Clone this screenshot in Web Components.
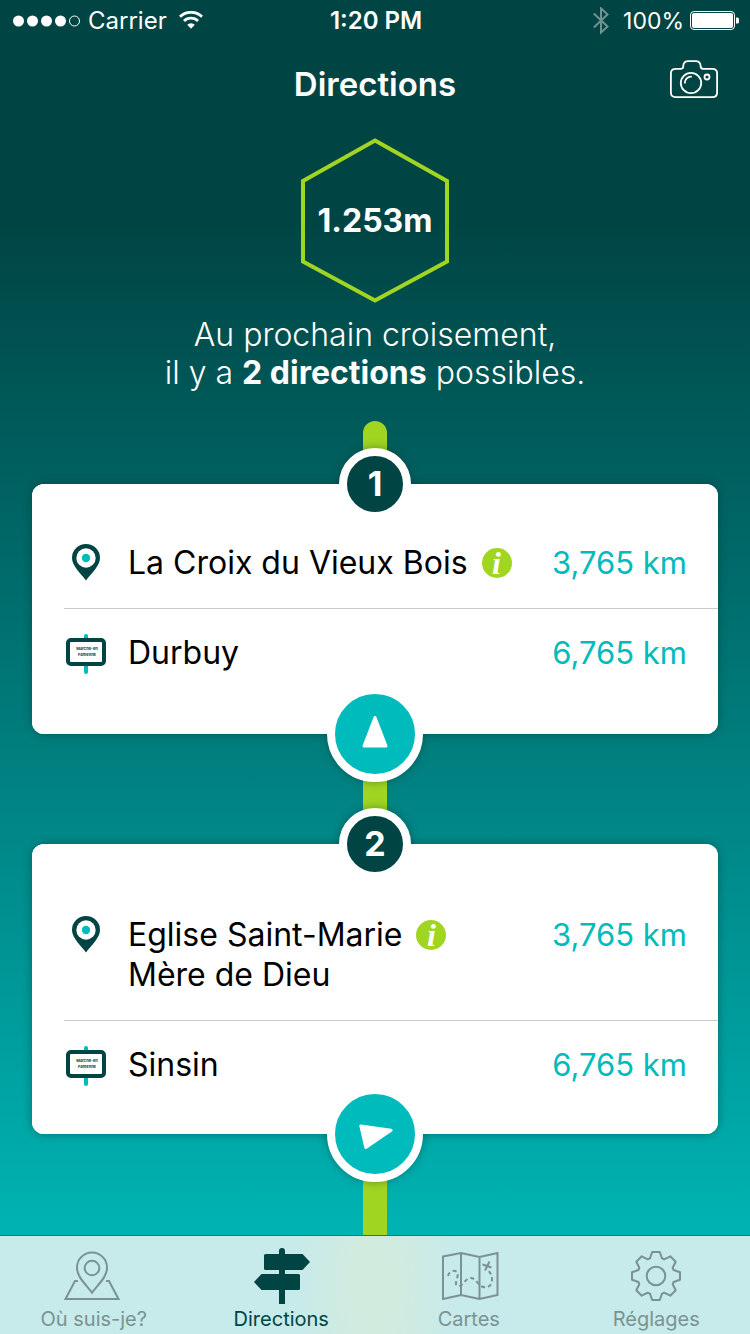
<!DOCTYPE html>
<html lang="fr">
<head>
<meta charset="utf-8">
<meta name="viewport" content="width=device-width, initial-scale=1">
<title>Directions</title>
<style>
  :root {
    --deep: #004443;
    --teal: #00bbbb;
    --lime: #a0d622;
    --muted: #7a9392;
  }
  html, body { margin: 0; }
  body {
    font-family: Inter, "Liberation Sans", sans-serif;
    color: #fff;
    background: #00b3b3;
  }
</style>
</head>
<body>
<directions-app>
  <status-bar slot="top" carrier="Carrier" time="1:20 PM" battery="100%"></status-bar>
  <nav-header slot="top">Directions</nav-header>
  <distance-hexagon slot="intro">1.253m</distance-hexagon>
  <intro-text slot="intro">Au prochain croisement,<br>il y a <b>2 directions</b> possibles.</intro-text>
  <direction-card number="1" heading="0">
    <place-row icon="pin" distance="3,765 km">La Croix du Vieux Bois <info-button></info-button></place-row>
    <place-row icon="sign" distance="6,765 km">Durbuy</place-row>
  </direction-card>
  <direction-card number="2" heading="77" class="low">
    <place-row icon="pin" distance="3,765 km">Eglise Saint-Marie <info-button></info-button><br>Mère de Dieu</place-row>
    <place-row icon="sign" distance="6,765 km">Sinsin</place-row>
  </direction-card>
  <tab-bar slot="bottom">
    <tab-item icon="locate">Où suis-je?</tab-item>
    <tab-item icon="signpost" active>Directions</tab-item>
    <tab-item icon="map">Cartes</tab-item>
    <tab-item icon="gear">Réglages</tab-item>
  </tab-bar>
</directions-app>

<script>
const define = (name, render) => customElements.define(name, class extends HTMLElement {
  connectedCallback() {
    if (!this.shadowRoot) this.attachShadow({ mode: 'open' }).innerHTML = render(this);
  }
});

define('directions-app', () => `
  <style>
    :host {
      display: flex; flex-direction: column; min-height: 100vh;
      background: linear-gradient(var(--deep) 16%, #00b4b4 93%);
    }
    .intro { display: flex; flex-direction: column; align-items: center; gap: 12px; padding: 9px 16px 0; }
    main { flex: 1; display: flex; flex-direction: column; }
    .route {
      position: relative; flex: 1; display: flex; flex-direction: column; gap: 110px;
      margin-top: 29px; padding: 63px 32px 100px;
    }
    .route::before {
      content: ""; position: absolute; top: 0; bottom: 0; left: calc(50% - 12px); width: 24px;
      background: var(--lime); border-radius: 12px 12px 0 0;
    }
  </style>
  <header><slot name="top"></slot></header>
  <main>
    <div class="intro"><slot name="intro"></slot></div>
    <div class="route"><slot></slot></div>
  </main>
  <slot name="bottom"></slot>`);

define('status-bar', el => `
  <style>
    :host {
      box-sizing: border-box; display: grid; grid-template-columns: 1fr auto 1fr; align-items: center;
      height: 40px; padding: 2px 11px 0 13px; font-size: 24px; line-height: 38px;
    }
    .side { display: flex; align-items: center; gap: 8px; }
    .wifi { margin-left: 4px; }
    .right { justify-content: flex-end; gap: 6px; font-size: 23px; }
    .bt { margin-right: 8px; }
    .time { font-weight: 600; }
    svg { display: block; }
  </style>
  <div class="side">
    <svg width="67" height="12" viewBox="0 0 67 12" fill="#fff">
      <circle cx="5.5" cy="6" r="5.5"/><circle cx="19.5" cy="6" r="5.5"/><circle cx="33.5" cy="6" r="5.5"/><circle cx="47.5" cy="6" r="5.5"/>
      <circle cx="61.5" cy="6" r="5" fill="none" stroke="#fff"/>
    </svg>
    <span>${el.getAttribute('carrier')}</span>
    <svg class="wifi" width="24" height="20" viewBox="0 0 24 20" fill="none" stroke="#fff" stroke-width="2.8">
      <path d="M1 5.800a15.600 15.600 0 0 1 22 0"/><path d="M5 10a10 10 0 0 1 14 0"/>
      <path d="M12 17.800l-3.800-4a5.400 5.400 0 0 1 7.600 0z" fill="#fff" stroke="none"/>
    </svg>
  </div>
  <span class="time">${el.getAttribute('time')}</span>
  <div class="side right">
    <svg class="bt" width="16" height="28" viewBox="0 0 16 28" fill="none" stroke="#6f9392" stroke-width="2">
      <path d="M.8 6.500 14.500 19.500 8 25.500V1.300L14.500 7.500 .8 20.500"/>
    </svg>
    <span>${el.getAttribute('battery')}</span>
    <svg width="49" height="20" viewBox="0 0 49 20">
      <rect x=".5" y=".5" width="44" height="18" rx="3.5" fill="none" stroke="#fff"/>
      <rect x="2" y="2" width="41" height="15" rx="2" fill="#fff"/>
      <path d="M46 6.500h1.500q1.500 0 1.500 1.500v3q0 1.500-1.500 1.500H46z" fill="#fff"/>
    </svg>
  </div>`);

define('nav-header', () => `
  <style>
    :host { display: grid; grid-template-columns: 1fr auto 1fr; align-items: center; height: 88px; padding: 0 31px; }
    h1 { grid-column: 2; margin: 0; font-size: 33px; line-height: 40px; font-weight: 600; }
    button { justify-self: end; padding: 0; margin-bottom: 10px; border: 0; background: none; color: inherit; cursor: pointer; }
    svg { display: block; }
  </style>
  <h1><slot></slot></h1>
  <button type="button" aria-label="Appareil photo">
    <svg width="50" height="40" viewBox="0 0 50 40" fill="none" stroke="currentColor" stroke-width="1.8">
      <path d="M6 9.900H11.500Q14 9.900 14.300 7.500V6.500Q14.800 2.100 19.200 2.100H26.800Q31 2.100 31.600 6.500V7.500Q32 9.900 34.500 9.900H43.500Q48.100 9.900 48.100 14.500V33.500Q48.100 38.100 43.500 38.100H6.500Q1.900 38.100 1.900 33.500V14.500Q1.900 9.900 6.500 9.900"/>
      <circle cx="22" cy="24" r="10.200"/>
      <path d="M15.800 24.500a6.300 6.300 0 0 1 7-6.800"/>
      <circle cx="38" cy="18" r="2.500"/>
    </svg>
  </button>`);

define('distance-hexagon', () => `
  <style>
    :host { display: grid; place-items: center; }
    svg, span { grid-area: 1 / 1; display: block; }
    span { font-size: 32px; line-height: 40px; font-weight: 700; }
  </style>
  <svg width="150" height="167" viewBox="0 0 150 167" fill="none" stroke="var(--lime)" stroke-width="4">
    <path d="M75 3.500 147 44V124.500L75 163.500 3 124.500V44z"/>
  </svg>
  <span><slot></slot></span>`);

define('intro-text', () => `
  <style>
    :host { display: block; text-align: center; font-size: 32px; line-height: 38px; font-weight: 300; }
    ::slotted(b) { font-weight: 700; }
  </style>
  <slot></slot>`);

define('direction-card', el => `
  <style>
    :host {
      position: relative; isolation: isolate; display: block; padding: 34px 0 35px 32px;
      background: #fff; color: #000; border-radius: 12px; box-shadow: 0 0 10px rgba(0, 40, 40, .4);
    }
    :host(.low) { padding: 46px 0 23px 32px; }
    .badge, .heading {
      position: absolute; left: 50%; box-sizing: border-box; display: grid; place-items: center;
      border: 8px solid #fff; border-radius: 50%; color: #fff;
    }
    .badge {
      top: 0; width: 72px; height: 72px; transform: translate(-50%, -50%);
      background: var(--deep); font-size: 34px; line-height: 40px; font-weight: 700;
    }
    .heading { bottom: 0; width: 96px; height: 96px; transform: translate(-50%, 50%); background: var(--teal); }
    .glow { position: absolute; left: 50%; border-radius: 50%; box-shadow: 0 0 10px rgba(0, 40, 40, .4); z-index: -1; }
    .glow.a { top: -36px; width: 72px; height: 72px; margin-left: -36px; }
    .glow.b { bottom: -48px; width: 96px; height: 96px; margin-left: -48px; }
    .face { position: absolute; inset: 0; background: #fff; border-radius: inherit; z-index: -1; }
    svg { display: block; transform: rotate(${el.getAttribute('heading')}deg); }
  </style>
  <div class="glow a"></div><div class="glow b"></div><div class="face"></div>
  <slot></slot>
  <div class="badge">${el.getAttribute('number')}</div>
  <div class="heading">
    <svg width="40" height="40" viewBox="0 0 40 40" fill="#fff" stroke="#fff" stroke-width="3" stroke-linejoin="round">
      <path d="M20 3.500 31 32H9z"/>
    </svg>
  </div>`);

const rowIcons = {
  pin: `
    <path d="M22 3A14 14 0 0 0 8 17C8 25 17 32.500 22 39.500 27 32.500 36 25 36 17A14 14 0 0 0 22 3z" fill="var(--deep)"/>
    <circle cx="22" cy="17" r="9.700" fill="#fff"/><circle cx="22" cy="17" r="4.200" fill="var(--teal)"/>`,
  sign: `
    <rect x="20" y="3" width="4" height="40" rx="2" fill="var(--teal)"/>
    <rect x="4" y="9" width="36" height="24" rx="3" fill="#fff" stroke="var(--deep)" stroke-width="4"/>
    <g font-size="4" font-weight="700" text-anchor="middle" fill="var(--deep)">
      <text x="23" y="19">Marche-en</text><text x="23" y="25">Famenne</text>
    </g>`
};

define('place-row', el => `
  <style>
    :host { display: flex; align-items: flex-start; padding: 25px 31px 25px 0; font-size: 32px; line-height: 40px; }
    :host(:not(:last-of-type)) { border-bottom: 1px solid #c8c8cc; }
    :host(:last-of-type) { padding: 24px 31px 26px 0; }
    svg { flex: none; margin: -2px 20px -2px 0; }
    .name { flex: 1; }
    .distance { color: var(--teal); font-size: 31px; }
  </style>
  <svg width="44" height="44" viewBox="0 0 44 44">${rowIcons[el.getAttribute('icon')]}</svg>
  <span class="name"><slot></slot></span>
  <span class="distance">${el.getAttribute('distance')}</span>`);

define('info-button', () => `
  <style>
    :host { display: inline-block; vertical-align: top; height: 30px; padding: 5px 0 5px 5px; }
    button {
      display: block; width: 30px; height: 30px; padding: 0; border: 0; border-radius: 50%; cursor: pointer;
      background: var(--lime); color: #fff; text-align: center;
      font: italic bold 32px/30px "Liberation Serif", serif;
    }
  </style>
  <button type="button">i</button>`);

define('tab-bar', () => `
  <style>
    :host { position: sticky; bottom: 0; z-index: 1; display: block; }
    nav {
      display: grid; grid-template-columns: repeat(4, 1fr); border-top: 1px solid #0b7d7c;
      background: radial-gradient(ellipse 80px 160px at center, #d1ebdf 30%, #c7eaea);
    }
  </style>
  <nav><slot></slot></nav>`);

const gearPath = () => {
  const tooth = [[-6, 17.6], [-3.8, 24], [3.8, 24], [6, 17.6]];
  const points = [];
  for (let k = 0; k < 8; k++) {
    const a = k * Math.PI / 4;
    for (const [x, y] of tooth) {
      points.push((30 + x * Math.cos(a) + y * Math.sin(a)).toFixed(1) + ' ' + (30 + x * Math.sin(a) - y * Math.cos(a)).toFixed(1));
    }
  }
  return 'M' + points.join('L') + 'z';
};

const tabIcons = {
  locate: `
    <g transform="translate(-2 0)">
      <path d="M30 46.800C25 39 15 32 15 21.500A15 15 0 0 1 45 21.500C45 32 35 39 30 46.800z"/><circle cx="30" cy="22" r="7.300"/>
      <path d="M16 35H13L3.500 53H56.500L47 35H44"/>
    </g>`,
  signpost: `
    <g fill="currentColor" stroke="none">
      <path d="M28 58V5a3 3 0 0 1 6 0V58z"/>
      <path d="M14.500 8H51.500L59 16 51.500 24H14.500Q13 24 13 22.500V9.500Q13 8 14.500 8z"/>
      <path d="M47.500 28H10.500L3 36 10.500 44H47.500Q49 44 49 42.500V29.500Q49 28 47.500 28z"/>
    </g>`,
  map: `
    <path d="M4 10.500 22 7 40.500 11 58.500 7V49L40.500 53 22 49 4 53zM22 7V49M40.500 11V53"/>
    <path d="M9 30C10 25 17 23 18.500 27S14 39 19 40 26 32 31.500 32 38 38 43 40.500 53 40 53 34 51 27 49 24" stroke-dasharray="4 3"/>
    <path d="M43.500 18.500 52.500 21.500M50.500 15.500 46 24.500"/>`,
  gear: `<path d="${gearPath()}" stroke-linejoin="round"/><circle cx="30" cy="30" r="9.300"/>`
};

define('tab-item', el => `
  <style>
    :host { display: block; }
    a {
      display: flex; flex-direction: column; align-items: center; padding: 10px 0 2px; gap: 1px;
      color: var(--muted); text-decoration: none; font-size: 20px; line-height: 25px;
    }
    a[aria-current] { color: var(--deep); }
    svg { display: block; }
  </style>
  <a href="#${el.getAttribute('icon')}" ${el.hasAttribute('active') ? 'aria-current="page"' : ''}>
    <svg width="60" height="60" viewBox="0 0 60 60" fill="none" stroke="currentColor" stroke-width="2">${tabIcons[el.getAttribute('icon')]}</svg>
    <span><slot></slot></span>
  </a>`);
</script>
</body>
</html>
